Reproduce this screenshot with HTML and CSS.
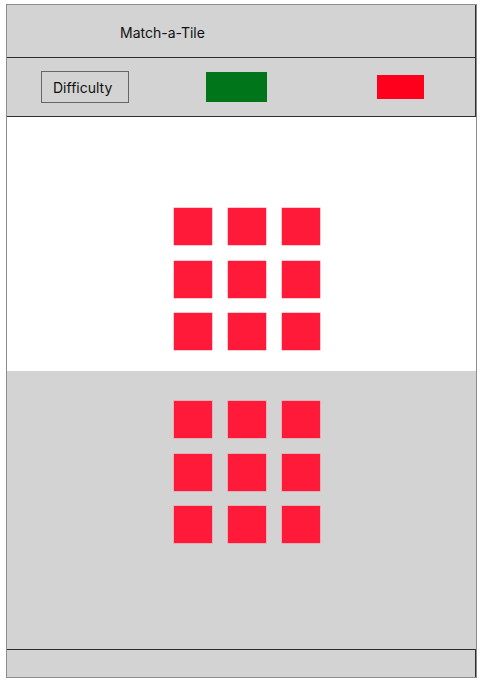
FILE: index.html
```html
<!DOCTYPE html>
<html>
<head>
<meta charset="utf-8">
<link rel="stylesheet" href="styles.css">
</head>
<body>
<div class="frame">
  <header class="title-bar"><span class="title">Match-a-Tile</span></header>
  <div class="tool-bar">
    <div class="difficulty">Difficulty</div>
    <div class="go"></div>
    <div class="stop"></div>
  </div>
  <section class="board board-top">
    <div class="grid">
      <div class="tile"></div><div class="tile"></div><div class="tile"></div>
      <div class="tile"></div><div class="tile"></div><div class="tile"></div>
      <div class="tile"></div><div class="tile"></div><div class="tile"></div>
    </div>
  </section>
  <section class="board board-bottom">
    <div class="grid">
      <div class="tile"></div><div class="tile"></div><div class="tile"></div>
      <div class="tile"></div><div class="tile"></div><div class="tile"></div>
      <div class="tile"></div><div class="tile"></div><div class="tile"></div>
    </div>
  </section>
  <footer class="foot"></footer>
</div>
</body>
</html>
```
FILE: styles.css
```css
* { box-sizing: border-box; }
html, body { margin: 0; padding: 0; background: #fff; }
body { font-family: Inter, "Noto Sans", sans-serif; color: #111; }

.frame {
  margin: 4px 0 0 6px;
  width: 471px;
  border: 1px solid #8c8c8c;
  display: flex;
  flex-direction: column;
}

.title-bar {
  height: 53px;
  background: #d3d3d3;
  border-bottom: 1px solid #2e2e2e;
  border-right: 1px solid #2e2e2e;
  display: flex;
  align-items: center;
  padding-left: 113px;
  padding-top: 2px;
}
.title { font-size: 14px; }

.tool-bar {
  height: 59px;
  background: #d3d3d3;
  border-bottom: 1px solid #2e2e2e;
  border-right: 1px solid #2e2e2e;
  display: flex;
  align-items: center;
  padding-left: 34px;
}
.difficulty {
  width: 88px;
  height: 32px;
  border: 1px solid #666;
  font-size: 14px;
  display: flex;
  align-items: center;
  padding-left: 11px;
}
.go {
  margin-left: 77px;
  width: 61px;
  height: 30px;
  background: #00751a;
}
.stop {
  margin-left: 110px;
  width: 47px;
  height: 24px;
  background: #ff001c;
}

.board { padding-left: 166.5px; }
.board-top { height: 254px; background: #fff; padding-top: 91px; }
.board-bottom { height: 278px; background: #d3d3d3; padding-top: 30px; }

.grid {
  display: grid;
  grid-template-columns: repeat(3, 38px);
  grid-auto-rows: 37px;
  column-gap: 16px;
  row-gap: 15.5px;
}
.tile { background: #ff1a3a; box-shadow: 0 0 0 0.5px rgba(255, 120, 140, 0.8); }

.foot {
  height: 28px;
  background: #d3d3d3;
  border-top: 1px solid #2e2e2e;
  border-right: 1px solid #2e2e2e;
}
```
